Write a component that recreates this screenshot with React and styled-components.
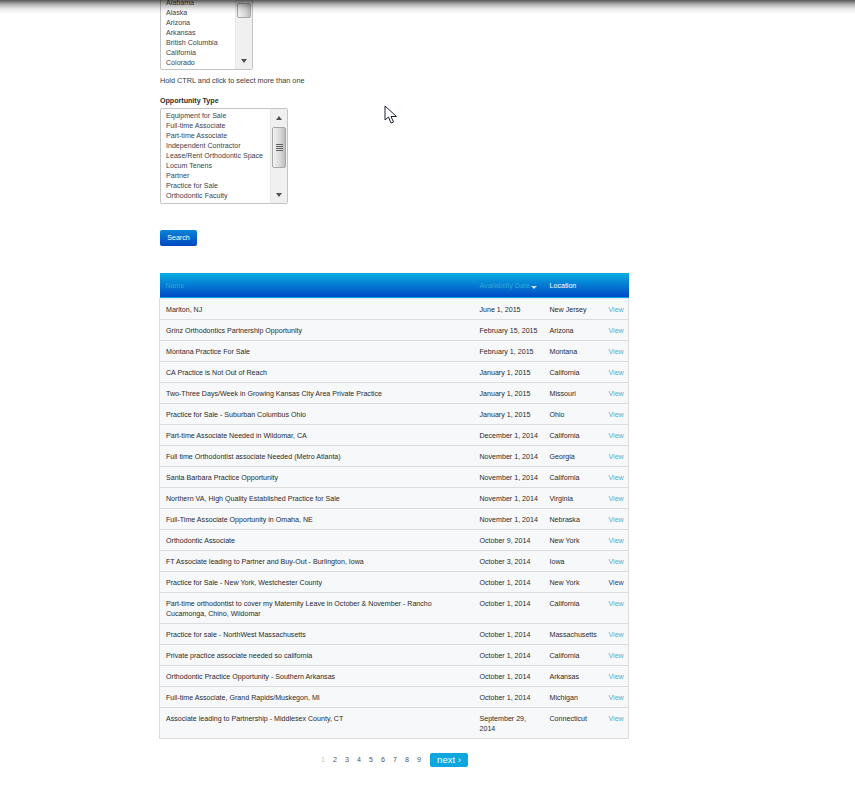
import React from 'react';
import styled, { createGlobalStyle } from 'styled-components';

const GlobalStyle = createGlobalStyle`
  html, body {
    margin: 0;
    padding: 0;
    height: 789px;
    overflow: hidden;
    background: #ffffff;
    font-family: "Liberation Sans", Arial, sans-serif;
    font-size: 7.1px;
    color: #333333;
  }
`;

const TopShade = styled.div`
  position: fixed;
  top: 0;
  left: 0;
  right: 0;
  height: 14px;
  background: linear-gradient(to bottom, rgba(0, 0, 0, 0.66) 0%, rgba(0, 0, 0, 0.32) 30%, rgba(0, 0, 0, 0.08) 65%, rgba(0, 0, 0, 0) 100%);
  z-index: 5;
`;

const Cursor = styled.svg`
  position: fixed;
  left: 384px;
  top: 105px;
  z-index: 6;
`;

const Content = styled.div`
  margin: -26px 0 0 160px;
  width: 469px;
`;

const ListBox = styled.div`
  display: flex;
  width: ${p => p.$width}px;
  height: 96px;
  box-sizing: border-box;
  border: 1px solid #c4c4c4;
  border-radius: 2px;
  background: #fff;
`;

const Options = styled.div`
  flex: 1;
  padding: ${p => p.$top}px 0 0 5px;
  overflow: hidden;
`;

const Option = styled.div`
  height: 10px;
  line-height: 10px;
  white-space: nowrap;
  color: #3a4350;
`;

const ScrollTrack = styled.div`
  display: flex;
  flex-direction: column;
  align-items: center;
  width: 16px;
  background: #f0f0f0;
  border-left: 1px solid #e8e8e8;
`;

const ArrowSlot = styled.div`
  height: 17px;
  width: 100%;
  flex: none;
  display: flex;
  align-items: center;
  justify-content: center;
`;

const Arrow = styled.div`
  width: 0;
  height: 0;
  border-left: 3.5px solid transparent;
  border-right: 3.5px solid transparent;
  ${p => (p.$up ? 'border-bottom: 4px solid #505050;' : 'border-top: 4px solid #505050;')}
`;

const Thumb = styled.div`
  width: 14px;
  height: ${p => p.$height}px;
  margin-top: ${p => p.$offset}px;
  box-sizing: border-box;
  border: 1px solid #a8a8a8;
  border-radius: 2px;
  background: linear-gradient(to right, #f2f2f2, #d8d8d8 60%, #bcbcbc);
  display: flex;
  flex-direction: column;
  align-items: center;
  justify-content: center;
  gap: 1px;
`;

const Grip = styled.span`
  width: 7px;
  height: 1px;
  background: #606060;
`;

const ScrollGap = styled.div`
  flex: 1;
`;

const Hint = styled.p`
  margin: 6px 0 0;
  height: 9px;
  line-height: 9px;
  font-size: 7.3px;
  color: #333b46;
`;

const Label = styled.label`
  display: block;
  margin: 12px 0 2px;
  height: 9px;
  line-height: 9px;
  font-weight: bold;
  color: #2b2b2b;
`;

const SearchButton = styled.button`
  display: block;
  margin: 26px 0 27px;
  width: 37px;
  height: 16px;
  padding: 0;
  border: 0;
  border-radius: 2px;
  background: linear-gradient(to bottom, #0a84d6, #0048c0);
  color: #ffffff;
  font: 7.1px "Liberation Sans", Arial, sans-serif;
`;

const ResultsTable = styled.table`
  width: 469px;
  margin-left: -1px;
  border-collapse: collapse;
  table-layout: fixed;
`;

const HeadRow = styled.tr`
  height: 25px;
  background: linear-gradient(to bottom, #08aee2, #0049c4);
  border-bottom: 1px solid #e4e8ee;
`;

const HeadCell = styled.th`
  padding: 2px 2px 0 7px;
  font-weight: normal;
  text-align: left;
  white-space: nowrap;
  color: ${p => (p.$active ? '#ffffff' : '#2ba8d2')};
  &:first-child {
    padding-left: 6px;
  }
`;

const SortCaret = styled.span`
  display: inline-block;
  width: 0;
  height: 0;
  margin-left: 1px;
  vertical-align: -1px;
  border-left: 3.5px solid transparent;
  border-right: 3.5px solid transparent;
  border-top: 3.5px solid #cfe6f5;
`;

const Row = styled.tr`
  background: #f7f8fa;
  border-bottom: 1px solid #dcdcdc;
`;

const Cell = styled.td`
  padding: 6px 2px 4px 7px;
  line-height: 10px;
  vertical-align: top;
  color: #2a2a2a;
  &:first-child {
    padding-left: 6px;
    padding-right: 7px;
    border-left: 1px solid #dcdcdc;
  }
  &:last-child {
    border-right: 1px solid #dcdcdc;
  }
`;

const ViewLink = styled.a`
  color: ${p => (p.$hover ? '#1c3f94' : '#4fb0d6')};
  text-decoration: none;
`;

const Pager = styled.div`
  display: flex;
  align-items: center;
  margin: 14px 0 0 317px;
  height: 15px;
`;

const PageNum = styled.span`
  width: 12px;
  text-align: center;
  color: ${p => (p.$current ? '#c4c4c4' : '#555555')};
`;

const NextButton = styled.a`
  margin-left: 5px;
  width: 38px;
  height: 14px;
  line-height: 14px;
  border-radius: 2px;
  background: #0ea6de;
  color: #ffffff;
  font-size: 9.5px;
  text-align: center;
`;

const regions = ['Alabama', 'Alaska', 'Arizona', 'Arkansas', 'British Columbia', 'California', 'Colorado'];
const types = ['Equipment for Sale', 'Full-time Associate', 'Part-time Associate', 'Independent Contractor', 'Lease/Rent Orthodontic Space', 'Locum Tenens', 'Partner', 'Practice for Sale', 'Orthodontic Faculty'];

const rows = [
  ['Marlton, NJ', 'June 1, 2015', 'New Jersey'],
  ['Grinz Orthodontics Partnership Opportunity', 'February 15, 2015', 'Arizona'],
  ['Montana Practice For Sale', 'February 1, 2015', 'Montana'],
  ['CA Practice is Not Out of Reach', 'January 1, 2015', 'California'],
  ['Two-Three Days/Week in Growing Kansas City Area Private Practice', 'January 1, 2015', 'Missouri'],
  ['Practice for Sale - Suburban Columbus Ohio', 'January 1, 2015', 'Ohio'],
  ['Part-time Associate Needed in Wildomar, CA', 'December 1, 2014', 'California'],
  ['Full time Orthodontist associate Needed (Metro Atlanta)', 'November 1, 2014', 'Georgia'],
  ['Santa Barbara Practice Opportunity', 'November 1, 2014', 'California'],
  ['Northern VA, High Quality Established Practice for Sale', 'November 1, 2014', 'Virginia'],
  ['Full-Time Associate Opportunity in Omaha, NE', 'November 1, 2014', 'Nebraska'],
  ['Orthodontic Associate', 'October 9, 2014', 'New York'],
  ['FT Associate leading to Partner and Buy-Out - Burlington, Iowa', 'October 3, 2014', 'Iowa'],
  ['Practice for Sale - New York, Westchester County', 'October 1, 2014', 'New York', true],
  ['Part-time orthodontist to cover my Maternity Leave in October & November - Rancho Cucamonga, Chino, Wildomar', 'October 1, 2014', 'California'],
  ['Practice for sale - NorthWest Massachusetts', 'October 1, 2014', 'Massachusetts'],
  ['Private practice associate needed so california', 'October 1, 2014', 'California'],
  ['Orthodontic Practice Opportunity - Southern Arkansas', 'October 1, 2014', 'Arkansas'],
  ['Full-time Associate, Grand Rapids/Muskegon, MI', 'October 1, 2014', 'Michigan'],
  ['Associate leading to Partnership - Middlesex County, CT', 'September 29, 2014', 'Connecticut'],
];

function SelectBox({ width, items, padTop, thumbHeight, thumbOffset, grip }) {
  return (
    <ListBox $width={width}>
      <Options $top={padTop}>
        {items.map((item, i) => <Option key={i}>{item}</Option>)}
      </Options>
      <ScrollTrack>
        <ArrowSlot><Arrow $up /></ArrowSlot>
        <Thumb $height={thumbHeight} $offset={thumbOffset}>
          {grip && <><Grip /><Grip /><Grip /><Grip /></>}
        </Thumb>
        <ScrollGap />
        <ArrowSlot><Arrow /></ArrowSlot>
      </ScrollTrack>
    </ListBox>
  );
}

export default function App() {
  return (
    <>
      <GlobalStyle />
      <TopShade />
      <Cursor width="14" height="20" viewBox="0 0 14 20">
        <path d="M1 1 L1 15 L4.5 12 L7 18 L9.5 17 L7 11.5 L12.5 11.5 Z" fill="#ffffff" stroke="#1a2230" strokeWidth="1" />
      </Cursor>
      <Content>
        <SelectBox width={93} items={regions} padTop={23} thumbHeight={15} thumbOffset={11} />
        <Hint>Hold CTRL and click to select more than one</Hint>
        <Label>Opportunity Type</Label>
        <SelectBox width={128} items={types} padTop={2} thumbHeight={41} thumbOffset={1} grip />
        <SearchButton>Search</SearchButton>
        <ResultsTable>
          <colgroup>
            <col style={{ width: 313 }} />
            <col style={{ width: 70 }} />
            <col style={{ width: 59 }} />
            <col style={{ width: 27 }} />
          </colgroup>
          <thead>
            <HeadRow>
              <HeadCell>Name</HeadCell>
              <HeadCell>Availability Date<SortCaret /></HeadCell>
              <HeadCell $active>Location</HeadCell>
              <HeadCell />
            </HeadRow>
          </thead>
          <tbody>
            {rows.map((r, i) => (
              <Row key={i}>
                <Cell>{r[0]}</Cell>
                <Cell>{r[1]}</Cell>
                <Cell>{r[2]}</Cell>
                <Cell><ViewLink $hover={r[3]}>View</ViewLink></Cell>
              </Row>
            ))}
          </tbody>
        </ResultsTable>
      </Content>
      <Pager>
        <PageNum $current>1</PageNum>
        {[2, 3, 4, 5, 6, 7, 8, 9].map(n => <PageNum key={n}>{n}</PageNum>)}
        <NextButton>next ›</NextButton>
      </Pager>
    </>
  );
}
